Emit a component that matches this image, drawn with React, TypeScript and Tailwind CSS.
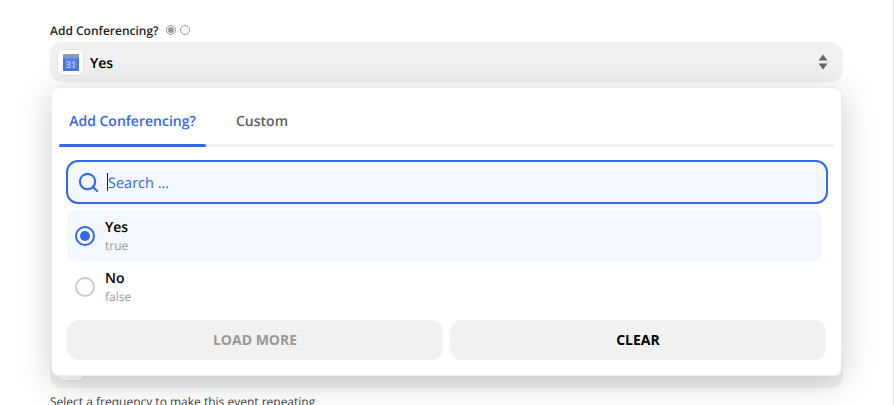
import { Search } from 'lucide-react';

const font = { fontFamily: '"Open Sans", sans-serif' };

function CalendarIcon() {
  return (
    <svg width="16" height="17" viewBox="0 0 16 17">
      <rect x="0" y="0" width="16" height="17" rx="1" fill="#4a72d9" />
      <rect x="0" y="0" width="16" height="4" fill="#8a9cc4" />
      <rect x="2" y="4" width="12" height="11" fill="#5b84e6" />
      <text x="8" y="13.5" textAnchor="middle" fontSize="9" fill="#dfe8fb" fontFamily="Open Sans, sans-serif">
        31
      </text>
    </svg>
  );
}

function Option({ label, value, selected }: { label: string; value: string; selected?: boolean }) {
  return (
    <div className={`flex items-center h-[51px] w-[755px] rounded-lg pl-[8px] ${selected ? 'bg-[#f3f8ff]' : ''}`}>
      {selected ? (
        <div className="w-5 h-5 rounded-full border-2 border-[#3367e8] flex items-center justify-center">
          <div className="w-[10px] h-[10px] rounded-full bg-[#3367e8]" />
        </div>
      ) : (
        <div className="w-5 h-5 rounded-full border-2 border-[#c9c9c9]" />
      )}
      <div className="ml-[10px] pt-[2px]">
        <div className="text-[14px] leading-[18px] font-semibold text-black">{label}</div>
        <div className="text-[12px] leading-[17px] text-[#999999]">{value}</div>
      </div>
    </div>
  );
}

export default function App() {
  return (
    <div style={font} className="relative h-[405px] overflow-hidden bg-white border-r border-[#e4e4e4] [text-rendering:geometricPrecision]">
      <div className="px-[50px] pt-[22px]">
        <div className="flex items-center h-[17px]">
          <span className="text-[12px] pt-[1px] font-semibold text-[#1c1c1c]">Add Conferencing?</span>
          <span className="ml-[7px] w-[10px] h-[10px] rounded-full border border-[#999999] flex items-center justify-center -mt-[1px]">
            <span className="w-[6px] h-[6px] rounded-full bg-[#999999]" />
          </span>
          <span className="ml-[4px] w-[10px] h-[10px] rounded-full border border-[#999999] -mt-[1px]" />
        </div>

        <div className="mt-[3px] flex items-center h-[40px] w-[793px] rounded-xl bg-[#f1f1f1] pl-[7px] pr-[15px]">
          <div className="w-[27px] h-[27px] rounded-md bg-white border border-[#e4e4e4] flex items-center justify-center">
            <CalendarIcon />
          </div>
          <span className="ml-[6px] pt-[2px] text-[14px] font-semibold text-black">Yes</span>
          <svg className="ml-auto" width="10" height="16" viewBox="0 0 10 16" fill="#666666">
            <path d="M5 0.5 L9.5 6.5 H0.5 Z" />
            <path d="M5 15.5 L9.5 9.5 H0.5 Z" />
          </svg>
        </div>

        <div className="mt-[266px] h-[40px] w-[793px] rounded-xl bg-[#f1f1f1] pl-[7px] pt-[6px]">
          <div className="w-[27px] h-[27px] rounded-md bg-white border border-[#e4e4e4]" />
        </div>
        <p className="mt-[5px] text-[12px] text-[#444444]">Select a frequency to make this event repeating</p>
      </div>

      {/* Dropdown */}
      <div className="absolute left-[51px] top-[87px] w-[791px] h-[289px] bg-white rounded-lg border border-[#ececec] shadow-[0_6px_34px_rgba(0,0,0,0.2)]">
        <div className="mx-[7px] flex h-[59px] border-b-[3px] border-[#f1f1f1]">
          <div className="relative w-[147px] pt-[24px] text-center text-[14px] leading-[20px] font-semibold text-[#3367e8]">
            Add Conferencing?
            <div className="absolute left-0 right-0 -bottom-[3px] h-[3px] rounded-full bg-[#3367e8]" />
          </div>
          <div className="ml-[30px] pt-[24px] text-[14px] leading-[20px] font-semibold text-[#5f5f5f]">Custom</div>
        </div>

        <div className="ml-[14px] mt-[13px] flex items-center h-[44px] w-[762px] rounded-xl border-2 border-[#3367e8] bg-[#f3f8ff] pl-[9px]">
          <Search size={23} strokeWidth={2.2} className="text-[#3367e8]" />
          <div className="ml-[7px] w-px h-[18px] bg-[#222222]" />
          <span className="text-[14.5px] pt-[3px] font-medium text-[#3367e8]">Search ...</span>
        </div>

        <div className="ml-[15px] mt-[6px] flex flex-col">
          <Option label="Yes" value="true" selected />
          <Option label="No" value="false" />
        </div>

        <div className="ml-[15px] mt-[8px] flex gap-[7px]">
          <button className="w-[376px] h-[40px] pb-[2px] rounded-xl bg-[#f1f1f1] text-[14px] font-bold text-[#999999]">LOAD MORE</button>
          <button className="w-[376px] h-[40px] pb-[2px] rounded-xl bg-[#f1f1f1] text-[14px] font-bold text-black">CLEAR</button>
        </div>
      </div>
    </div>
  );
}
